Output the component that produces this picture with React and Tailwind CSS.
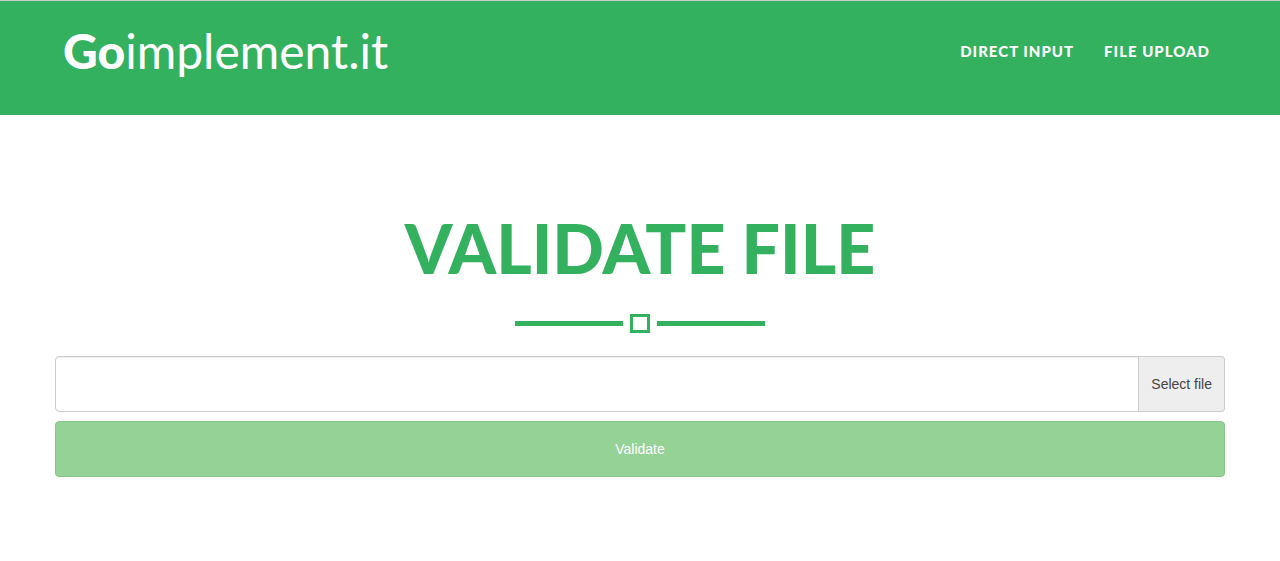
export default function App() {
  return (
    <div className="min-h-screen bg-white font-['Liberation_Sans',sans-serif] text-sm">
      <header className="border-t border-[#d0c8cc] bg-[#34b15e] text-white">
        <div className="mx-auto flex max-w-[1170px] items-start justify-between px-2 pt-[11px] pb-[25px]">
          <a href="#home" className="font-['Lato',sans-serif] text-5xl leading-[78px] font-normal">
            <span className="font-black">Go</span>implement.it
          </a>
          <nav className="flex gap-[30px] px-[7px] pt-[29px] font-['Lato',sans-serif] text-[15px] leading-5 font-black tracking-[1px] uppercase">
            <a href="#direct">Direct input</a>
            <a href="#upload">File upload</a>
          </nav>
        </div>
      </header>
      <main className="mx-auto max-w-[1170px] pt-[95px]">
        <h1 className="text-center font-['Lato',sans-serif] text-[68px] leading-[76px] font-black text-[#34b15e] uppercase">Validate file</h1>
        <div className="mt-7 flex items-center justify-center gap-[7px]">
          <span className="h-[5px] w-[108px] bg-[#34b15e]" />
          <span className="h-[19px] w-5 border-[3px] border-[#34b15e]" />
          <span className="h-[5px] w-[108px] bg-[#34b15e]" />
        </div>
        <form className="mt-[23px]">
          <div className="flex h-14">
            <input type="text" aria-label="File name" className="min-w-0 flex-1 rounded-l border border-[#ccc] px-3 shadow-[inset_0_1px_1px_rgba(0,0,0,0.075)]" />
            <button type="button" className="rounded-r border border-l-0 border-[#ccc] bg-[#eee] px-3 text-[#444]">Select file</button>
          </div>
          <button type="submit" disabled className="mt-[9px] h-14 w-full rounded border border-[#86c788] bg-[#95d296] text-white">Validate</button>
        </form>
      </main>
    </div>
  );
}
